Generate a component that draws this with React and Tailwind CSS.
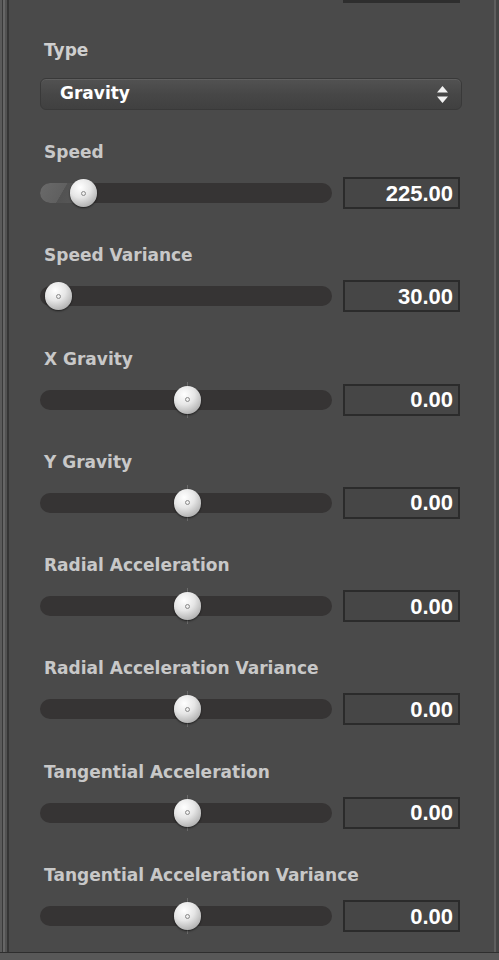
import React from 'react';

const LABEL_FONT = { fontFamily: '"DejaVu Sans", "Liberation Sans", sans-serif' };
const NUM_FONT = { fontFamily: '"Liberation Sans", Arial, sans-serif' };

// thumb centers are measured from the track's left edge (track is 292px wide)
const rows = [
  { label: 'Speed', value: '225.00', thumb: 43, fill: true },
  { label: 'Speed Variance', value: '30.00', thumb: 18 },
  { label: 'X Gravity', value: '0.00', thumb: 147, ticks: true },
  { label: 'Y Gravity', value: '0.00', thumb: 147, ticks: true },
  { label: 'Radial Acceleration', value: '0.00', thumb: 147, ticks: true },
  { label: 'Radial Acceleration Variance', value: '0.00', thumb: 147, ticks: true },
  { label: 'Tangential Acceleration', value: '0.00', thumb: 147, ticks: true },
  { label: 'Tangential Acceleration Variance', value: '0.00', thumb: 147, ticks: true },
];

function Thumb({ x }) {
  return (
    <div
      className="absolute top-1/2 w-[27px] h-[28px] -mt-[14px] -ml-[13.5px] rounded-full bg-[radial-gradient(circle_at_38%_30%,#ffffff_0%,#e6e6e6_40%,#a8a8a8_85%,#7a7a7a_100%)] shadow-[0_1px_2px_rgba(0,0,0,0.6)] flex items-center justify-center"
      style={{ left: x }}
    >
      <div className="w-[5px] h-[5px] rounded-full border border-[#8a8a8a]" />
    </div>
  );
}

function SliderRow({ value, thumb, fill, ticks }) {
  return (
    <div className="flex items-center h-[32px]">
      <div className="relative w-[292px] h-[20px] rounded-full bg-[#363434]">
        {fill && (
          <div
            className="absolute left-0 top-0 h-full rounded-l-full bg-[linear-gradient(120deg,#6a6a6a_0%,#606060_50%,#525252_51%,#5a5a5a_100%)]"
            style={{ width: thumb }}
          />
        )}
        {ticks && (
          <>
            <div className="absolute left-[147px] -top-[8px] w-px h-[4px] bg-[#6a6a6a]" />
            <div className="absolute left-[147px] -bottom-[8px] w-px h-[4px] bg-[#6a6a6a]" />
          </>
        )}
        <Thumb x={thumb} />
      </div>
      <div
        className="ml-[11px] w-[117px] h-[32px] border-2 border-[#2b2b2b] bg-[#464646] flex items-center justify-end pr-[5px] text-[22px] font-bold text-white"
        style={NUM_FONT}
      >
        {value}
      </div>
    </div>
  );
}

export default function App() {
  return (
    <div className="w-[499px] h-[960px] bg-[#4a4a4a] flex flex-col overflow-hidden">
      <div className="flex flex-1 min-h-0">
        {/* left frame edge */}
        <div className="w-[2px] bg-[#5a5a5a]" />
        <div className="w-px bg-[#3a3a3a]" />
        <div className="w-[2px] bg-[#666]" />
        <div className="w-[2px] bg-[#525252]" />
        <div className="w-[2px] bg-[#353535]" />

        <div className="flex-1 relative pl-[31px]">
          {/* bottom edge of the field above */}
          <div className="absolute left-[334px] top-0 w-[117px] h-[3px] bg-[#2e2e2e]" />

          <div className="pt-[38px]">
            <div className="h-[24px] leading-[24px] pl-[4px] text-[17px] font-bold text-[#cfcfcf]" style={LABEL_FONT}>
              Type
            </div>
            <div className="mt-[16px] w-[422px] h-[32px] rounded-[6px] border border-[#393939] bg-[linear-gradient(#525252,#474747_50%,#404040)] shadow-[inset_0_1px_0_rgba(255,255,255,0.08)] flex items-center pl-[19px] pr-[13px]">
              <span className="flex-1 text-[17px] font-bold text-white" style={LABEL_FONT}>
                Gravity
              </span>
              <svg width="11" height="17" viewBox="0 0 11 17">
                <path d="M5.5 0 L11 6.5 L0 6.5 Z" fill="#f2f2f2" />
                <path d="M0 10.5 L11 10.5 L5.5 17 Z" fill="#f2f2f2" />
              </svg>
            </div>
          </div>

          <div className="mt-[30px]">
            {rows.map((r) => (
              <div key={r.label} className="mb-[34.3px]">
                <div
                  className="h-[24px] leading-[24px] pl-[4px] text-[17px] font-bold text-[#c8c8c8]"
                  style={LABEL_FONT}
                >
                  {r.label}
                </div>
                <div className="mt-[13px]">
                  <SliderRow {...r} />
                </div>
              </div>
            ))}
          </div>
        </div>

        {/* right frame edge */}
        <div className="w-[2px] bg-[#5e5e5e]" />
        <div className="w-[3px] bg-[#444]" />
      </div>
      <div className="h-px bg-[#2e2e2e]" />
      <div className="h-[7px] bg-[#585858]" />
    </div>
  );
}
